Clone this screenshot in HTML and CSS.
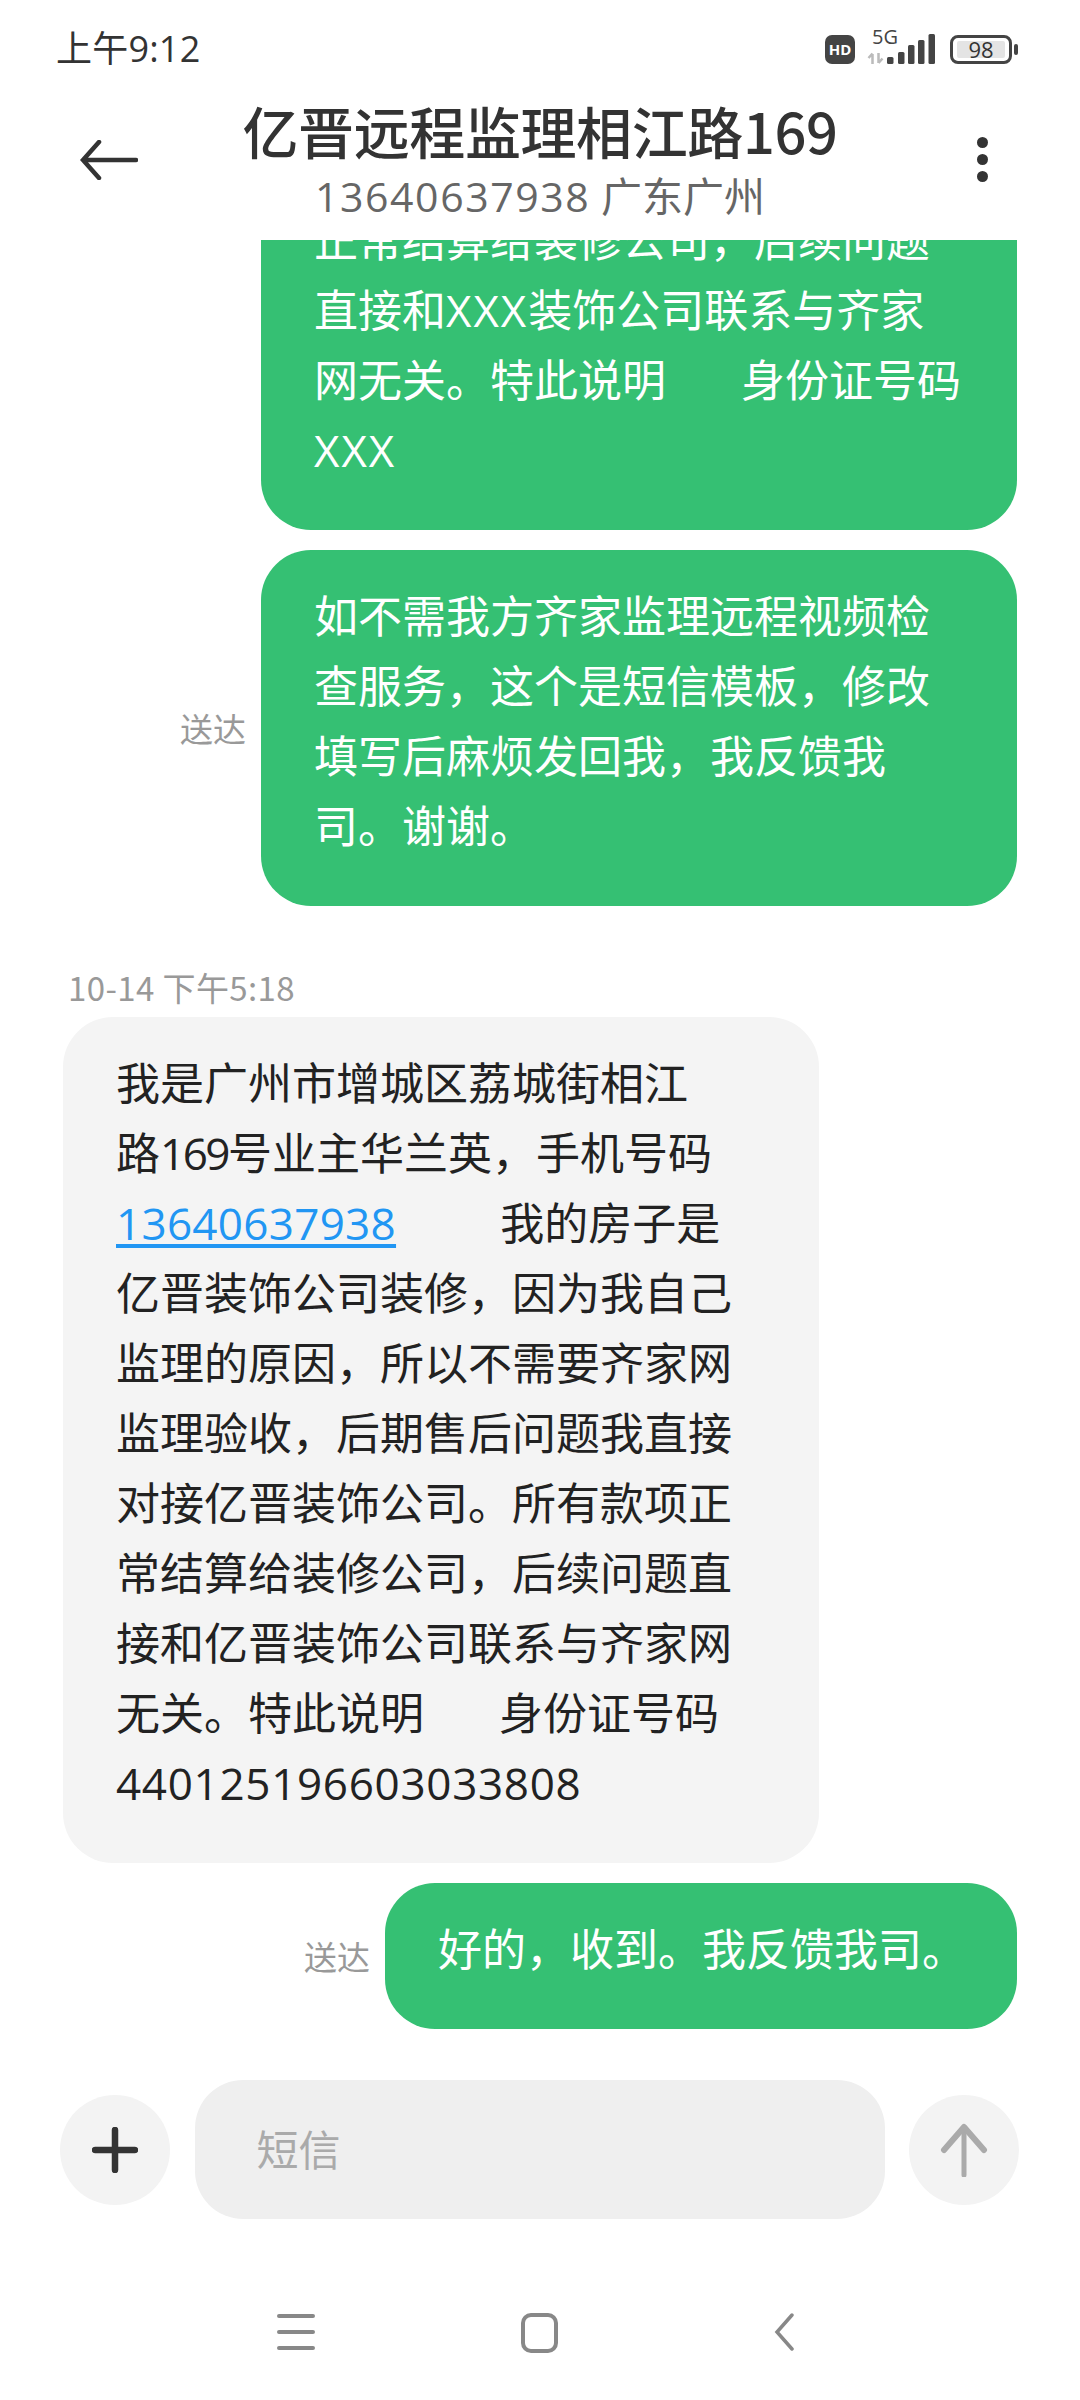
FILE: index.html
```html
<!DOCTYPE html>
<html lang="zh-CN">
<head>
<meta charset="utf-8">
<title>短信</title>
<link rel="stylesheet" href="styles.css">
</head>
<body>
<div class="phone">
  <div class="status">
    <span class="clock">上午9:12</span>
    <div class="status-icons">
      <span class="hd">HD</span>
      <svg class="signal" width="70" height="38" viewBox="0 0 70 38">
        <text x="7" y="17" class="five-g">5G</text>
        <path d="M7.5 37V27M3.5 31l4-4.500M13.500 26v10M13.500 36l4-4.500" fill="none" stroke="#bbb" stroke-width="2.500"/>
        <rect x="22" y="30" width="6.500" height="7" rx="1.500" fill="#444"/>
        <rect x="33" y="25" width="6.500" height="12" rx="1.500" fill="#444"/>
        <rect x="43" y="18" width="6.500" height="19" rx="1.500" fill="#444"/>
        <rect x="53" y="13" width="6.500" height="24" rx="1.500" fill="#444"/>
        <rect x="63.500" y="7" width="6.500" height="30" rx="1.500" fill="#444"/>
      </svg>
      <div class="battery"><span class="level">98</span></div>
      <span class="tip"></span>
    </div>
  </div>
  <header class="topbar">
    <svg class="back" width="58" height="40" viewBox="0 0 58 40"><path d="M56 20H4M19 2 3 20l16 18" fill="none" stroke="#333" stroke-width="4.500" stroke-linecap="round"/></svg>
    <div class="contact">
      <div class="name">亿晋远程监理相江路169</div>
      <div class="sub"><span class="digits">13640637938</span> 广东广州</div>
    </div>
    <div class="dots"><i></i><i></i><i></i></div>
  </header>
  <main class="thread">
    <div class="row sent"><div class="bubble out">正常结算给装修公司，后续问题<br>直接和<span class="xxx">XXX</span>装饰公司联系与齐家<br>网无关。特此说明       身份证号码<br><span class="xxx">XXX</span></div></div>
    <div class="row sent"><span class="state">送达</span><div class="bubble out">如不需我方齐家监理远程视频检<br>查服务，这个是短信模板，修改<br>填写后麻烦发回我，我反馈我<br>司。谢谢。</div></div>
    <div class="stamp">10-14 下午5:18</div>
    <div class="row received"><div class="bubble in">我是广州市增城区荔城街相江<br>路<span class="road">169</span>号业主华兰英，手机号码<br><a class="link">13640637938</a><span class="gap">          </span>我的房子是<br>亿晋装饰公司装修，因为我自己<br>监理的原因，所以不需要齐家网<br>监理验收，后期售后问题我直接<br>对接亿晋装饰公司。所有款项正<br>常结算给装修公司，后续问题直<br>接和亿晋装饰公司联系与齐家网<br>无关。特此说明       身份证号码<br><span class="idnum">440125196603033808</span></div></div>
    <div class="row sent"><span class="state">送达</span><div class="bubble out short">好的，收到。我反馈我司。</div></div>
  </main>
  <div class="composer">
    <button class="round"><svg width="46" height="46" viewBox="0 0 46 46"><path d="M23 3v40M3 23h40" stroke="#333" stroke-width="6.500" stroke-linecap="round"/></svg></button>
    <div class="field">短信</div>
    <button class="round"><svg width="48" height="54" viewBox="0 0 48 54"><path d="M24 52V6" fill="none" stroke="#aaa" stroke-width="5" stroke-linecap="round"/><path d="M4 27 24 4l20 23" fill="none" stroke="#aaa" stroke-width="6" stroke-linecap="round" stroke-linejoin="round"/></svg></button>
  </div>
  <nav class="navbar">
    <svg width="38" height="38" viewBox="0 0 38 38"><path d="M2 3h34M2 19h34M2 35h34" stroke="#888" stroke-width="4" stroke-linecap="round"/></svg>
    <svg width="37" height="40" viewBox="0 0 37 40"><rect x="2" y="2" width="33" height="36" rx="8" fill="none" stroke="#888" stroke-width="4"/></svg>
    <svg width="20" height="38" viewBox="0 0 20 38"><path d="M18 2 3 19l15 17" fill="none" stroke="#888" stroke-width="3.500" stroke-linecap="round"/></svg>
  </nav>
</div>
</body>
</html>
```
FILE: styles.css
```css
* { box-sizing: border-box; }
html, body { margin: 0; padding: 0; background: #fff; }
body { font-family: "Open Sans", "Noto Sans CJK SC", sans-serif; color: #222; }
.phone { width: 1080px; height: 2400px; display: flex; flex-direction: column; overflow: hidden; }

.status { height: 96px; flex: none; display: flex; align-items: center; justify-content: space-between; padding: 2px 62px 0 56px; }
.clock { font-size: 36px; line-height: 44px; letter-spacing: 0.2px; color: #333; }
.status-icons { display: flex; align-items: center; }
.hd { width: 30px; height: 29px; border-radius: 7px; background: #444; color: #fff; font-size: 15px; font-weight: 700; line-height: 29px; text-align: center; }
.signal { margin-left: 10px; margin-top: -6px; }
.five-g { font-size: 20px; fill: #444; }
.battery { width: 62px; height: 29px; margin-left: 15px; border: 3px solid #444; border-radius: 8px; padding: 3px 4px; display: flex; }
.level { flex: 1; background: #e4e4e4; border-radius: 2px; font-size: 22px; line-height: 17px; text-align: center; color: #333; }
.tip { width: 4px; height: 11px; margin-left: 2px; background: #444; border-radius: 2px; }

.topbar { height: 144px; flex: none; display: grid; grid-template-columns: 1fr auto 1fr; align-items: start; padding: 0 80px; }
.back { margin-top: 44px; }
.contact { text-align: center; }
.name { font-size: 56px; line-height: 68px; font-weight: 500; letter-spacing: -0.4px; color: #333; font-family: "Noto Sans CJK SC", sans-serif; }
.sub { font-size: 41px; line-height: 50px; margin-top: 7px; color: #666; }
.digits { letter-spacing: 1.6px; }
.dots { display: flex; flex-direction: column; gap: 6px; margin: 41px 12px 0 0; justify-self: end; }
.dots i { display: block; width: 11px; height: 11px; border-radius: 50%; background: #333; }

.thread { flex: 1; min-height: 0; display: flex; flex-direction: column; justify-content: flex-end; overflow: hidden; }
.row { display: flex; align-items: center; flex: none; margin-bottom: 20px; }
.row:last-child { margin-bottom: 0; }
.sent { justify-content: flex-end; padding-right: 63px; }
.received { padding-left: 63px; }
.bubble { width: 756px; padding: 31px 53px 45px; border-radius: 50px; font-size: 44px; line-height: 70px; word-spacing: -0.7px; white-space: pre; flex: none; }
.out { background: #35c073; color: #fff; }
.in { background: #f4f4f4; color: #222; }
.short { width: 632px; }
.xxx { letter-spacing: 2px; }
.road { letter-spacing: -2.5px; }
.gap { word-spacing: -1px; }
.idnum { letter-spacing: 0.7px; }
.state { font-size: 33px; color: #999; margin-right: 15px; }
.stamp { font-family: "Noto Sans CJK SC", sans-serif; font-size: 33px; line-height: 44px; letter-spacing: 0.4px; color: #999; padding: 59px 0 8px 68px; flex: none; margin-top: -20px; }
.link { color: #2196f3; letter-spacing: 0.3px; text-decoration: underline; text-underline-offset: 4px; }

.composer { flex: none; height: 191px; padding: 51px 61px 0 60px; display: flex; align-items: flex-start; justify-content: space-between; }
.round { width: 110px; height: 110px; margin-top: 15px; border: 0; padding: 0; border-radius: 50%; background: #f3f3f3; display: flex; align-items: center; justify-content: center; flex: none; }
.field { width: 690px; height: 139px; border-radius: 48px; background: #efefef; color: #aaa; font-size: 42px; line-height: 139px; padding-left: 62px; }

.navbar { flex: none; height: 180px; display: flex; align-items: flex-start; padding: 93px 0 0 277px; }
.navbar svg { flex: none; }
.navbar svg:nth-child(2) { margin-left: 206px; }
.navbar svg:nth-child(3) { margin-left: 216px; }
```
